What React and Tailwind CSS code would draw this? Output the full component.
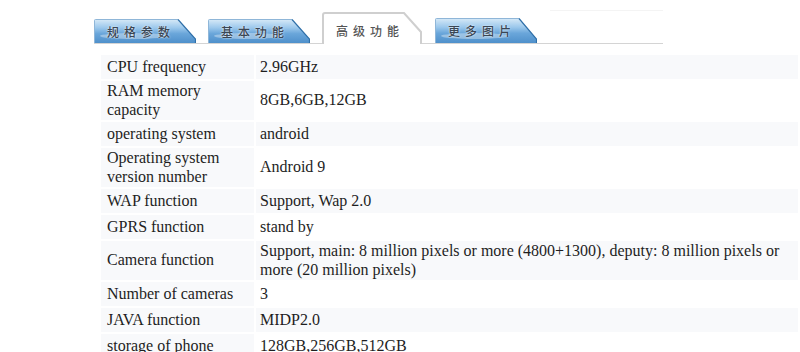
import React from 'react'

// spec rows: [label, value], value cell shaded on even rows
const ROWS = [
  ['CPU frequency', '2.96GHz'],
  ['RAM memory capacity', '8GB,6GB,12GB'],
  ['operating system', 'android'],
  ['Operating system version number', 'Android 9'],
  ['WAP function', 'Support, Wap 2.0'],
  ['GPRS function', 'stand by'],
  ['Camera function', 'Support, main: 8 million pixels or more (4800+1300), deputy: 8 million pixels or more (20 million pixels)'],
  ['Number of cameras', '3'],
  ['JAVA function', 'MIDP2.0'],
  ['storage of phone', '128GB,256GB,512GB'],
]

function BlueTab({ label, id, tall }) {
  const h = tall ? 25 : 24
  return (
    <div className={`relative w-[102px] shrink-0 ${tall ? 'h-[25px]' : 'h-[24px]'}`}>
      <svg className="absolute inset-0" width="102" height={h} viewBox={`0 0 102 ${h}`}>
        <defs>
          <linearGradient id={`g${id}`} x1="0" y1="0" x2="0" y2="1">
            <stop offset="0" stopColor="#d6e9f7" />
            <stop offset="0.35" stopColor="#9cc8ec" />
            <stop offset="0.6" stopColor="#6aa6da" />
            <stop offset="1" stopColor="#4f90cb" />
          </linearGradient>
        </defs>
        <path d={`M0 ${h} V1.5 Q0 0.5 1.5 0.5 H84 L101.5 ${h - 4} V${h} Z`} fill={`url(#g${id})`} />
        <path d={`M0.5 ${h} V1.5 Q0.5 0.5 1.5 0.5 H84`} fill="none" stroke="#8fb6d8" strokeWidth="1" />
        <path d={`M84 0.5 L101.5 ${h - 4} V${h}`} fill="none" stroke="#2f6fa8" strokeWidth="1.2" />
        <ellipse cx="40" cy={h - 7} rx="34" ry="3" fill="#ffffff" opacity="0.35" />
      </svg>
      <span className="relative block pl-[13px] pt-[6px] text-[12px] leading-[13px] tracking-[5px] font-medium text-[#3a4654] [text-shadow:0_0_2px_#fff] [font-family:'Noto_Sans_CJK_SC',sans-serif]">
        {label}
      </span>
    </div>
  )
}

function ActiveTab({ label }) {
  return (
    <div className="relative w-[100px] h-[32px] shrink-0 mb-[-1px] bg-white">
      <svg className="absolute inset-0" width="100" height="32" viewBox="0 0 100 32">
        <path d="M1 32 V3 Q1 1 3 1 H82 L99 20 V32" fill="#fff" stroke="#cfcfcf" strokeWidth="2" />
      </svg>
      <span className="relative block pl-[14px] pt-[12px] text-[12px] leading-[13px] tracking-[5px] font-medium text-[#555] [font-family:'Noto_Sans_CJK_SC',sans-serif]">
        {label}
      </span>
    </div>
  )
}

export default function App() {
  return (
    <div className="w-[800px] h-[352px] overflow-hidden bg-white">
      {/* tab strip */}
      <div className="ml-[94px] mt-[10px] w-[569px] h-[34px] flex items-end gap-[12px] border-b border-[#d4d4d4]">
        <BlueTab id="a" label="规格参数" />
        <BlueTab id="b" label="基本功能" />
        <ActiveTab label="高级功能" />
        <div className="ml-[1px]">
          <BlueTab id="c" label="更多图片" tall />
        </div>
        <div className="flex-1 self-start h-px bg-[#f4f4f4] ml-[1px]" />
      </div>

      {/* spec table */}
      <table className="mt-[9px] ml-[99px] w-[701px] border-separate border-spacing-[2px] text-[16px] leading-[18.5px] text-[#1e1e1e] [font-family:'Liberation_Serif','Times_New_Roman',serif]">
        <tbody>
          {ROWS.map(([label, value], i) => (
            <tr key={label}>
              <td className="w-[153px] h-[24px] py-px pl-[6px] pr-[2px] align-middle bg-[#f8f9fb]">{label}</td>
              <td className={`h-[24px] py-px pl-[4px] pr-[2px] align-middle ${i % 2 === 0 ? 'bg-[#f8f9fb]' : 'bg-white'}`}>
                {value}
              </td>
            </tr>
          ))}
        </tbody>
      </table>
    </div>
  )
}
